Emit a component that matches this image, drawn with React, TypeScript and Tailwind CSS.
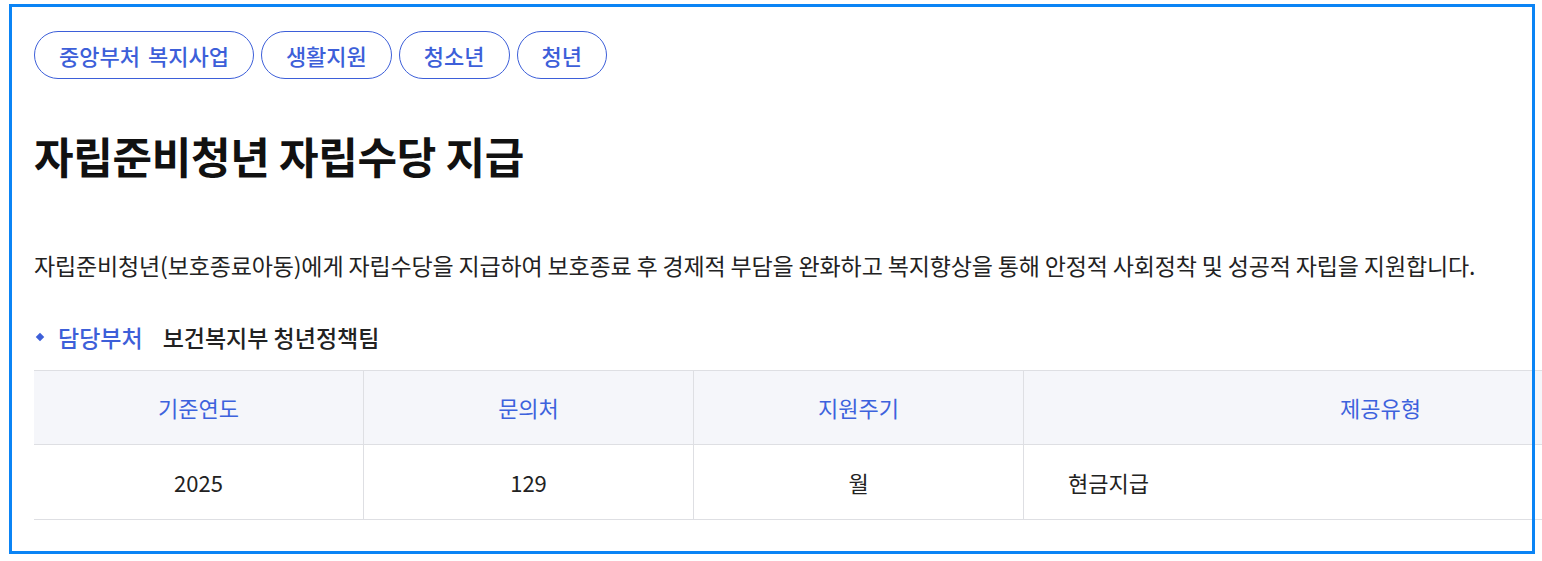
import React from "react";

const tags = ["중앙부처 복지사업", "생활지원", "청소년", "청년"];

export default function App() {
  return (
    <div
      className="w-[1542px] h-[561px] overflow-hidden bg-white"
      style={{ fontFamily: '"Noto Sans CJK KR", "Noto Sans", sans-serif' }}
    >
      <div className="relative ml-[9px] mt-[4px] w-[1526px] h-[550px] pl-[25px] pt-[27px]">
        <div className="flex gap-[7px]">
          {tags.map((t) => (
            <div
              key={t}
              className="h-[48px] flex items-center px-[24px] rounded-full border border-[#3d5fd9] text-[#3d5fd9] text-[22px] font-medium [word-spacing:3px]"
            >
              {t}
            </div>
          ))}
        </div>

        <h1 className="mt-[48px] h-[56px] leading-[56px] text-[43px] font-bold tracking-[-0.3px] text-[#111]">
          자립준비청년 자립수당 지급
        </h1>

        <p className="mt-[67px] h-[30px] leading-[30px] text-[23px] tracking-[-0.15px] text-[#222]">
          자립준비청년(보호종료아동)에게 자립수당을 지급하여 보호종료 후 경제적 부담을 완화하고 복지향상을 통해 안정적 사회정착 및 성공적 자립을 지원합니다.
        </p>

        <div className="mt-[42px] h-[30px] flex items-center text-[23px]">
          <span className="w-[6px] h-[6px] bg-[#3d5fd9] rotate-45 ml-[3px] mr-[15px]" />
          <span className="text-[#3d5fd9] font-medium">담당부처</span>
          <span className="ml-[20px] text-[#222] font-medium">보건복지부 청년정책팀</span>
        </div>

        <div className="mt-[18px] w-[1703px] grid grid-cols-[330px_330px_330px_713px] border-t border-[#dedfe3]">
          {["기준연도", "문의처", "지원주기"].map((h) => (
            <div
              key={h}
              className="h-[74px] flex items-center justify-center bg-[#f5f6fa] border-r border-b border-[#dedfe3] text-[22px] text-[#3d62dd]"
            >
              {h}
            </div>
          ))}
          <div className="h-[74px] flex items-center justify-center bg-[#f5f6fa] border-b border-[#dedfe3] text-[22px] text-[#3d62dd]">
            제공유형
          </div>
          {["2025", "129", "월"].map((v) => (
            <div
              key={v}
              className="h-[75px] flex items-center justify-center border-r border-b border-[#dedfe3] text-[22px] text-[#222]"
            >
              {v}
            </div>
          ))}
          <div className="h-[75px] flex items-center pl-[44px] border-b border-[#dedfe3] text-[22px] text-[#222]">
            현금지급
          </div>
        </div>

        <div className="pointer-events-none absolute inset-0 border-[3px] border-[#0b84f5]" />
      </div>
    </div>
  );
}
